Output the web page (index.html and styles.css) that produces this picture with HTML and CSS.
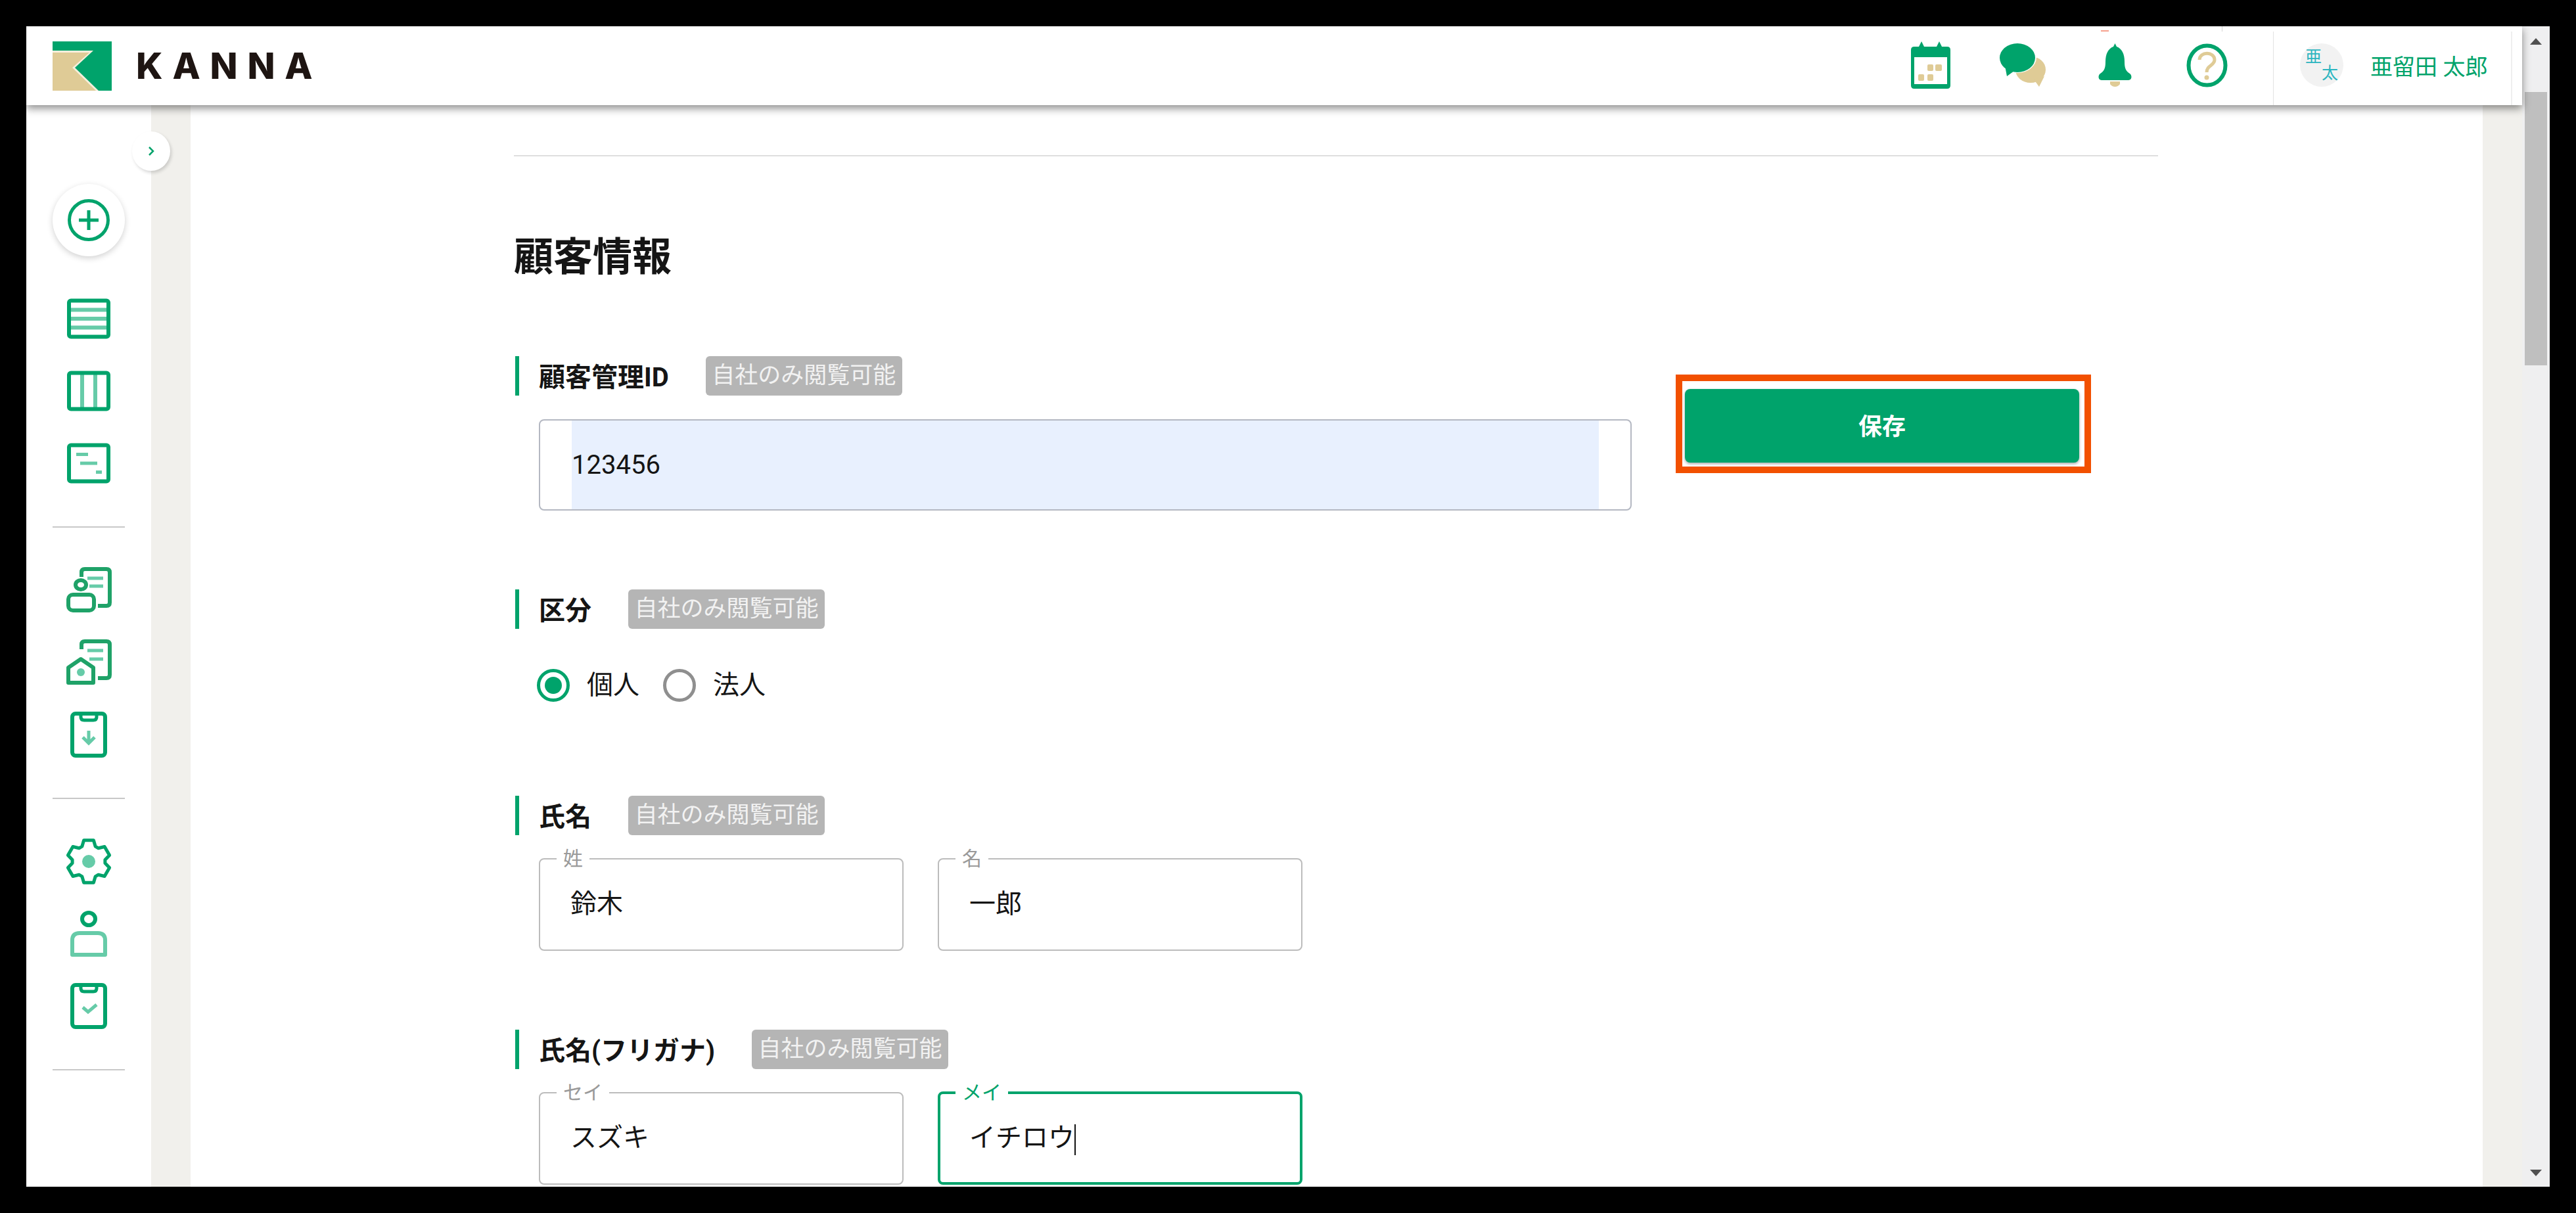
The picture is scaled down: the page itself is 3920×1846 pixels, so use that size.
FILE: index.html
```html
<!DOCTYPE html>
<html lang="ja">
<head>
    <meta charset="UTF-8">
    <title>KANNA</title>
    <link rel="stylesheet" href="styles.css">
</head>
<body>
    <div class="window">
        <div class="page">
            <header class="header">
                <svg class="logo-mark" viewBox="0 0 90 75" width="90" height="75">
                    <rect width="90" height="75" fill="#00a36b"/>
                    <polygon points="0,14 62,14 34,40 70,75 0,75" fill="#f5efdc"/>
                    <polygon points="0,17 56,17 30,40 66,75 0,75" fill="#dfcb96"/>
                </svg>
                <div class="logo-text">KANNA</div>

                <div class="header-icons">
                    <div class="icon-slot">
                        <svg viewBox="0 0 60 72" width="60" height="72">
                            <path d="M12 8 L16 0 L20 8 H39 L43 0 L47 8 H55 Q60 8 60 13 V67 Q60 72 55 72 H5 Q0 72 0 67 V13 Q0 8 5 8 Z" fill="#00a36b"/>
                            <rect x="5" y="24" width="50" height="41" fill="#fff"/>
                            <rect x="25" y="35" width="9" height="10" rx="2" fill="#dfcb96"/>
                            <rect x="37" y="35" width="10" height="10" rx="2" fill="#dfcb96"/>
                            <rect x="11" y="50" width="9" height="10" rx="2" fill="#dfcb96"/>
                            <rect x="25" y="50" width="9" height="10" rx="2" fill="#dfcb96"/>
                        </svg>
                    </div>
                    <div class="icon-slot">
                        <svg viewBox="0 0 70 66" width="70" height="66">
                            <ellipse cx="47" cy="40" rx="23" ry="20" fill="#dfcb96"/>
                            <polygon points="52,55 68,50 60,66" fill="#dfcb96"/>
                            <ellipse cx="27" cy="21" rx="29" ry="24" fill="#fff"/>
                            <ellipse cx="27" cy="22" rx="27" ry="22" fill="#00a36b"/>
                            <polygon points="8,34 22,42 11,50" fill="#00a36b"/>
                        </svg>
                    </div>
                    <div class="icon-slot">
                        <span class="bell-mark"></span>
                        <svg viewBox="0 0 51 66" width="51" height="66">
                            <path d="M25.5 0 L28 5 C36 8 40 16 40 28 C40 38 42 42 48 46 C52 49 51 56 46 56 H5 C0 56 -1 49 3 46 C9 42 11 38 11 28 C11 16 15 8 23 5 Z" fill="#00a36b"/>
                            <path d="M18 58 H33 V62 Q30 66 25.5 66 Q21 66 18 62 Z" fill="#dfcb96"/>
                        </svg>
                    </div>
                    <div class="icon-slot">
                        <span class="help-mark"></span>
                        <svg viewBox="0 0 63 67" width="63" height="67">
                            <ellipse cx="31.5" cy="33.5" rx="28" ry="30" fill="none" stroke="#00a36b" stroke-width="6"/>
                            <path d="M20 25 C20 12 43 12 43 25 C43 34 31 33 31 44" fill="none" stroke="#dfcb96" stroke-width="5"/>
                            <circle cx="31" cy="52" r="3.5" fill="#dfcb96"/>
                        </svg>
                    </div>
                </div>

                <div class="user">
                    <div class="avatar">
                        <span class="avatar-top">亜</span>
                        <span class="avatar-bottom">太</span>
                    </div>
                    <div class="user-name">亜留田 太郎</div>
                </div>
            </header>

            <div class="body">
                <nav class="sidebar">
                    <div class="toggle">
                        <svg viewBox="0 0 12 16" width="12" height="16">
                            <path d="M3 2 L9 8 L3 14" fill="none" stroke="#00a36b" stroke-width="2.5"/>
                        </svg>
                    </div>
                    <div class="add-button">
                        <svg viewBox="0 0 64 64" width="64" height="64">
                            <circle cx="32" cy="32" r="29.5" fill="none" stroke="#00a36b" stroke-width="5"/>
                            <path d="M17 32 H47 M32 17 V47" fill="none" stroke="#00a36b" stroke-width="5"/>
                        </svg>
                    </div>

                    <div class="nav-group">
                        <div class="nav-item">
                            <svg viewBox="0 0 80 80" width="80" height="80">
                                <path d="M10 26.5 H70 M10 40 H70 M10 53.5 H70" class="light" stroke-width="6"/>
                                <rect x="10" y="12.5" width="60" height="55" rx="3" class="dark" stroke-width="6"/>
                            </svg>
                        </div>
                        <div class="nav-item">
                            <svg viewBox="0 0 80 80" width="80" height="80">
                                <path d="M30 12 V68 M50 12 V68" class="light" stroke-width="6"/>
                                <rect x="10" y="12.5" width="60" height="55" rx="3" class="dark" stroke-width="6"/>
                            </svg>
                        </div>
                        <div class="nav-item">
                            <svg viewBox="0 0 80 80" width="80" height="80">
                                <path d="M21 26.5 H39 M27 40 H53 M51 53.5 H60" class="light" stroke-width="5"/>
                                <rect x="10" y="12.5" width="60" height="55" rx="3" class="dark" stroke-width="6"/>
                            </svg>
                        </div>
                    </div>
                    <hr class="nav-divider">

                    <div class="nav-group">
                        <div class="nav-item">
                            <svg viewBox="0 0 80 80" width="80" height="80">
                                <path d="M38 22 H62 M41 34 H62" class="light" stroke-width="5"/>
                                <path d="M29 20 V13 Q29 8 34 8 H67 Q72 8 72 13 V59 Q72 64 67 64 H54" class="dim" stroke-width="6"/>
                                <ellipse cx="28" cy="32" rx="8" ry="7" class="dim" stroke-width="6"/>
                                <rect x="9" y="47" width="39" height="24" rx="7" class="dim" stroke-width="6"/>
                            </svg>
                        </div>
                        <div class="nav-item">
                            <svg viewBox="0 0 80 80" width="80" height="80">
                                <path d="M38 22 H62 M41 35 H62" class="light" stroke-width="5"/>
                                <path d="M29 20 V13 Q29 8 34 8 H67 Q72 8 72 13 V59 Q72 64 67 64 H54" class="dim" stroke-width="6"/>
                                <path d="M9 48 L28 35 L47 48 V71 H9 Z" class="dim" stroke-width="6" stroke-linejoin="round"/>
                                <ellipse cx="28" cy="55" rx="6" ry="6" fill="#66cba8"/>
                            </svg>
                        </div>
                        <div class="nav-item">
                            <svg viewBox="0 0 80 80" width="80" height="80">
                                <path d="M40 34 V52 M31 44 L40 53 L49 44" class="light" stroke-width="5"/>
                                <rect x="15" y="8" width="50" height="64" rx="5" class="dark" stroke-width="6"/>
                                <path d="M28 8 V13 Q28 18 33 18 H47 Q52 18 52 13 V8" class="dark" stroke-width="5"/>
                            </svg>
                        </div>
                    </div>
                    <hr class="nav-divider">

                    <div class="nav-group">
                        <div class="nav-item">
                            <svg viewBox="0 0 80 80" width="80" height="80">
                                <path d="M29.8 17.2 L32.6 7.8 H47.4 L50.2 17.2 L54.7 19.8 L64.1 17.5 L71.6 30.4 L64.9 37.4 V42.6 L71.6 49.6 L64.1 62.5 L54.7 60.2 L50.2 62.8 L47.4 72.2 H32.6 L29.8 62.8 L25.3 60.2 L15.9 62.5 L8.4 49.6 L15.1 42.6 V37.4 L8.4 30.4 L15.9 17.5 L25.3 19.8 Z" class="dark" stroke-width="5" stroke-linejoin="round"/>
                                <ellipse cx="40" cy="40" rx="10" ry="10" fill="#66cba8"/>
                            </svg>
                        </div>
                        <div class="nav-item">
                            <svg viewBox="0 0 80 80" width="80" height="80">
                                <ellipse cx="40" cy="17.5" rx="10" ry="9.5" class="dark" stroke-width="6"/>
                                <path d="M15 72 V50 Q15 39 26 39 H54 Q65 39 65 50 V72 Z" class="light" stroke-width="6" stroke-linejoin="round"/>
                            </svg>
                        </div>
                        <div class="nav-item">
                            <svg viewBox="0 0 80 80" width="80" height="80">
                                <path d="M31 42 L39 49 L52 38" class="light" stroke-width="5"/>
                                <rect x="15" y="8" width="50" height="64" rx="5" class="dark" stroke-width="6"/>
                                <path d="M28 8 V13 Q28 18 33 18 H47 Q52 18 52 13 V8" class="dark" stroke-width="5"/>
                            </svg>
                        </div>
                    </div>
                    <hr class="nav-divider">
                </nav>

                <div class="workspace">
                    <main class="main">
                        <hr class="top-rule">
                        <h2 class="page-title">顧客情報</h2>

                        <div class="form-row">
                            <div class="form-col">
                                <section class="section">
                                    <div class="field-head">
                                        <span class="field-label">顧客管理ID</span>
                                        <span class="badge">自社のみ閲覧可能</span>
                                    </div>
                                    <div class="text-input">
                                        <div class="autofill">123456</div>
                                    </div>
                                </section>

                                <section class="section section-radios">
                                    <div class="field-head">
                                        <span class="field-label">区分</span>
                                        <span class="badge">自社のみ閲覧可能</span>
                                    </div>
                                    <div class="radios">
                                        <span class="radio radio-on"></span>
                                        <span class="radio-text">個人</span>
                                        <span class="radio"></span>
                                        <span class="radio-text">法人</span>
                                    </div>
                                </section>

                                <section class="section">
                                    <div class="field-head">
                                        <span class="field-label">氏名</span>
                                        <span class="badge">自社のみ閲覧可能</span>
                                    </div>
                                    <div class="name-pair">
                                        <fieldset class="name-field">
                                            <legend>姓</legend>
                                            <div class="name-value">鈴木</div>
                                        </fieldset>
                                        <fieldset class="name-field">
                                            <legend>名</legend>
                                            <div class="name-value">一郎</div>
                                        </fieldset>
                                    </div>
                                </section>

                                <section class="section">
                                    <div class="field-head">
                                        <span class="field-label">氏名(フリガナ)</span>
                                        <span class="badge">自社のみ閲覧可能</span>
                                    </div>
                                    <div class="name-pair">
                                        <fieldset class="name-field">
                                            <legend>セイ</legend>
                                            <div class="name-value">スズキ</div>
                                        </fieldset>
                                        <fieldset class="name-field name-focus">
                                            <legend>メイ</legend>
                                            <div class="name-value">イチロウ<span class="caret"></span></div>
                                        </fieldset>
                                    </div>
                                </section>
                            </div>

                            <div class="save-area">
                                <button class="save-button">保存</button>
                            </div>
                        </div>
                    </main>
                </div>
            </div>
        </div>

        <div class="scrollbar">
            <span class="arrow-up"></span>
            <span class="thumb"></span>
            <span class="arrow-down"></span>
        </div>
    </div>
</body>
</html>
```

FILE: styles.css
```css
:root {
    --green: #00a36b;
    --light-green: #66cba8;
    --tan: #dfcb96;
    --beige: #f1f0ec;
    --line: #bcbcbc;
    --ink: #151515;
}

* {
    margin: 0;
    padding: 0;
    box-sizing: border-box;
}

body {
    background: #000;
    padding: 40px;
    height: 1846px;
    overflow: hidden;
    font-family: Roboto, "Noto Sans CJK JP", sans-serif;
    color: var(--ink);
}

.window {
    display: flex;
    width: 3840px;
    height: 1766px;
    overflow: hidden;
    background: #fff;
}

.page {
    flex: 1;
    min-width: 0;
    display: flex;
    flex-direction: column;
}

/* header */
.header {
    position: relative;
    z-index: 2;
    flex: none;
    display: flex;
    align-items: center;
    height: 120px;
    padding: 0 15px 0 40px;
    background: #fff;
    box-shadow: 0 5px 12px rgba(0, 0, 0, 0.45);
}

.logo-mark {
    flex: none;
}

.logo-text {
    margin-left: 37px;
    font-family: Inter, sans-serif;
    font-size: 55px;
    font-weight: 800;
    letter-spacing: 14.8px;
    line-height: 1;
    color: #1e1512;
}

.header-icons {
    display: flex;
    margin-left: auto;
}

.icon-slot {
    position: relative;
    display: flex;
    justify-content: center;
    align-items: center;
    width: 140px;
    height: 120px;
    padding-bottom: 2px;
}

.bell-mark {
    position: absolute;
    top: 6px;
    left: 49px;
    width: 12px;
    height: 2px;
    background: #f7a18e;
}

.help-mark {
    position: absolute;
    top: 0;
    left: 93px;
    width: 1px;
    height: 8px;
    background: #d5d5d5;
}

.user {
    align-self: stretch;
    display: flex;
    align-items: center;
    gap: 41px;
    width: 364px;
    margin: 8px 0 0 31px;
    padding: 0 0 10px 40px;
    border-left: 1px solid #e2e2e2;
    border-right: 2px solid #eeeeee;
}

.avatar {
    flex: none;
    display: grid;
    grid-template-columns: 25px 25px;
    grid-template-rows: 25px 25px;
    align-content: center;
    justify-content: center;
    width: 66px;
    height: 66px;
    border-radius: 50%;
    background: #f2f2f2;
    font-size: 25px;
    line-height: 25px;
    color: #2bb5c0;
}

.avatar-top {
    grid-column: 1;
    grid-row: 1;
}

.avatar-bottom {
    grid-column: 2;
    grid-row: 2;
}

.user-name {
    font-size: 34px;
    white-space: nowrap;
    color: var(--green);
}

/* sidebar */
.body {
    flex: 1;
    min-height: 0;
    display: flex;
}

.sidebar {
    position: relative;
    z-index: 1;
    flex: none;
    display: flex;
    flex-direction: column;
    align-items: center;
    width: 190px;
    padding-top: 120px;
    background: #fff;
}

.toggle {
    position: absolute;
    top: 40px;
    right: -29px;
    display: flex;
    align-items: center;
    justify-content: center;
    width: 58px;
    height: 60px;
    border-radius: 50%;
    background: #fff;
    box-shadow: 2px 3px 5px rgba(0, 0, 0, 0.16);
}

.add-button {
    flex: none;
    display: flex;
    align-items: center;
    justify-content: center;
    width: 110px;
    height: 110px;
    margin-bottom: 40px;
    border-radius: 50%;
    background: #fff;
    box-shadow: 0 3px 10px rgba(0, 0, 0, 0.18);
}

.nav-item {
    display: flex;
    align-items: center;
    justify-content: center;
    width: 110px;
    height: 110px;
}

.nav-divider {
    flex: none;
    width: 110px;
    height: 2px;
    margin: 41px 0 40px;
    border: none;
    background: #c8c8c8;
}

.dark,
.dim,
.light {
    fill: none;
}

.dark {
    stroke: var(--green);
}

.dim {
    stroke: #1fa268;
}

.light {
    stroke: var(--light-green);
}

/* main */
.workspace {
    flex: 1;
    min-width: 0;
    padding: 0 60px;
    background: var(--beige);
}

.main {
    height: 100%;
    padding: 76px 0 0 492px;
    background: #fff;
    overflow: hidden;
}

.top-rule {
    width: 2502px;
    height: 2px;
    border: none;
    background: #dedede;
}

.page-title {
    margin-top: 118px;
    font-size: 60px;
    font-weight: bold;
    line-height: 72px;
}

.form-row {
    display: flex;
    align-items: flex-start;
    gap: 67px;
}

.form-col {
    flex: none;
    width: 1701px;
    padding-top: 114px;
}

.section {
    margin-bottom: 120px;
}

.section-radios {
    margin-bottom: 143px;
}

.field-head {
    display: flex;
    align-items: center;
    gap: 56px;
    height: 60px;
    padding-left: 30px;
    border-left: 6px solid var(--green);
    margin-left: 2px;
}

.field-label {
    padding-bottom: 3px;
    font-size: 40px;
    font-weight: bold;
    white-space: nowrap;
}

.badge {
    display: block;
    width: 299px;
    height: 60px;
    border-radius: 6px;
    background: #b5b5b5;
    color: #f2f2f2;
    font-size: 35px;
    line-height: 60px;
    text-align: center;
    white-space: nowrap;
}

.text-input {
    height: 139px;
    margin: 36px 0 0 38px;
    padding: 0 48px;
    border: 2px solid #b4b8c2;
    border-radius: 8px;
}

.autofill {
    height: 135px;
    background: #e8f0fe;
    font-size: 40px;
    line-height: 135px;
}

.radios {
    display: flex;
    align-items: center;
    height: 50px;
    margin: 61px 0 0 35px;
}

.radio {
    flex: none;
    display: flex;
    align-items: center;
    justify-content: center;
    width: 50px;
    height: 50px;
    margin-right: 26px;
    border: 5px solid #8f8f8f;
    border-radius: 50%;
}

.radio-on {
    border-color: var(--green);
}

.radio-on::after {
    content: "";
    width: 26px;
    height: 26px;
    border-radius: 50%;
    background: var(--green);
}

.radio-text {
    font-size: 40px;
    line-height: 50px;
    margin-right: 36px;
}

.name-pair {
    display: flex;
    gap: 52px;
    margin: 18px 0 0 38px;
}

.name-field {
    flex: none;
    width: 555px;
    height: 158px;
    padding: 0 46px;
    border: 2px solid var(--line);
    border-radius: 8px;
}

.name-field legend {
    margin-left: -21px;
    padding: 0 10px;
    font-size: 30px;
    line-height: 36px;
    color: #9a9a9a;
}

.name-value {
    height: 120px;
    font-size: 40px;
    line-height: 102px;
    white-space: nowrap;
}

.name-focus {
    border: 4px solid var(--green);
}

.name-focus legend {
    color: var(--green);
    margin-left: -23px;
}

.name-focus .name-value {
    margin-left: -2px;
}

.caret {
    display: inline-block;
    width: 2px;
    height: 47px;
    vertical-align: middle;
    background: #111;
}

/* save button with its orange callout frame */
.save-area {
    flex: none;
    width: 632px;
    height: 150px;
    margin-top: 142px;
    padding: 12px 8px 6px 4px;
    border: 10px solid #f25000;
}

.save-button {
    display: block;
    width: 600px;
    height: 112px;
    padding-bottom: 4px;
    border: none;
    border-radius: 8px;
    background: var(--green);
    box-shadow: 0 2px 4px rgba(0, 0, 0, 0.35);
    color: #fff;
    font-family: inherit;
    font-size: 36px;
    font-weight: bold;
}

/* page scrollbar */
.scrollbar {
    flex: none;
    display: flex;
    flex-direction: column;
    align-items: center;
    width: 42px;
    padding: 18px 0 16px;
    background: #efeff0;
}

.arrow-up {
    width: 0;
    height: 0;
    border-left: 9px solid transparent;
    border-right: 9px solid transparent;
    border-bottom: 10px solid #505050;
}

.thumb {
    width: 34px;
    height: 416px;
    margin-top: 72px;
    background: #bfbfbf;
}

.arrow-down {
    width: 0;
    height: 0;
    margin-top: auto;
    border-left: 9px solid transparent;
    border-right: 9px solid transparent;
    border-top: 10px solid #505050;
}
```
